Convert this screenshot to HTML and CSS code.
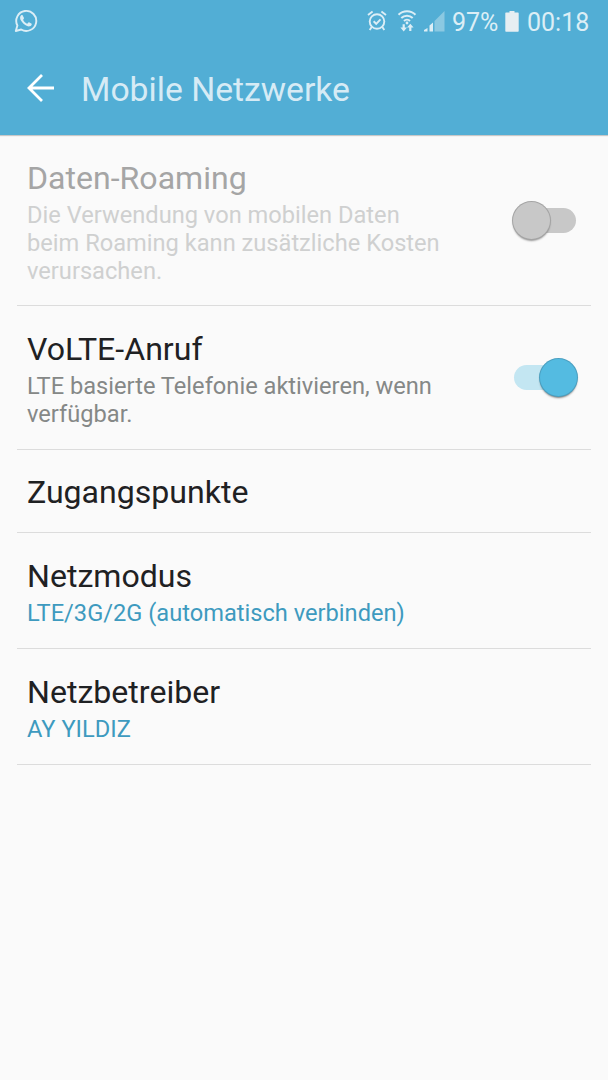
FILE: index.html
```
<!DOCTYPE html>
<html lang="de">
  <head>
    <meta charset="utf-8">
    <title>Mobile Netzwerke</title>
    <link rel="stylesheet" href="styles.css">
  </head>
  <body>
    <header>
      <div class="status">
        <svg class="whatsapp" width="24" height="24" viewBox="0 0 24 24">
          <path d="M1.800 22l1.600-5.500A10 10 0 1 1 7.200 20.500z" fill="none" stroke="currentColor" stroke-width="1.9" stroke-linejoin="round"/>
          <path d="M8.6 6.3c-.4-.6-.9-.4-1.4 0-2 2-.9 4.500.8 6.700 2.100 2.700 5.200 4.900 7.800 4.300 1.400-.4 2.200-1.500 1.900-2.600l-2.700-1.400c-.8-.2-1.200 1.500-2 1.400-1.500-.6-3-2-3.800-3.600-.2-.7 1-1.200.8-2z" fill="currentColor"/>
        </svg>
        <svg class="alarm" width="20" height="22" viewBox="0 0 20 22">
          <g fill="none" stroke="currentColor" stroke-width="1.9">
            <circle cx="10" cy="11.500" r="7.300"/>
            <path d="M1 5L5.600 1.500M19 5L14.400 1.500M4.700 17l-2 3M15.300 17l2 3M6.600 11.300l2.600 2.500 4.300-4.500"/>
          </g>
        </svg>
        <svg class="wifi" width="20" height="22" viewBox="0 0 20 22">
          <g fill="none" stroke="currentColor" stroke-width="2">
            <path d="M1.500 4.700a12 12 0 0 1 17 0M4.300 8a8.100 8.100 0 0 1 11.400 0M7 11a4.300 4.300 0 0 1 6 0"/>
          </g>
          <circle cx="10" cy="13" r="1.400" fill="currentColor"/>
          <path d="M5.600 14.300h2.200v3.200h2.200L6.700 21.500l-3.300-4h2.200zM12.200 21h2.200v-3.500h2.200l-3.300-3.700-3.300 3.700h2.200z" fill="currentColor"/>
        </svg>
        <svg class="signal" width="21" height="21" viewBox="0 0 21 21" fill="currentColor">
          <path d="M0 20.500V19l3.500-2v3.500zM5.500 20.500v-6l3.500-3v9z"/>
          <path d="M10.500 20.500V10L20.500 0v20.500z" opacity=".42"/>
        </svg>
        <span class="percent">97%</span>
        <svg class="battery" width="14" height="21" viewBox="0 0 14 21" fill="currentColor">
          <path d="M4.500 0h5v1.500h3.500q.7 0 .7.700V20q0 .7-.7.700H1q-.7 0-.7-.7V2.200q0-.7.7-.7h3.500z"/>
        </svg>
        <span class="clock">00:18</span>
      </div>
      <div class="toolbar">
        <svg class="back" width="28" height="28" viewBox="0 0 28 28">
          <path d="M15 1L2 14l13 13M2 14h25" fill="none" stroke="#fff" stroke-width="2.800"/>
        </svg>
        <h1>Mobile Netzwerke</h1>
      </div>
    </header>
    <main>
      <section class="item disabled">
        <div class="text">
          <h2>Daten-Roaming</h2>
          <p>Die Verwendung von mobilen Daten beim Roaming kann zusätzliche Kosten verursachen.</p>
        </div>
        <div class="switch"><span class="knob"></span></div>
      </section>
      <section class="item volte">
        <div class="text">
          <h2>VoLTE-Anruf</h2>
          <p>LTE basierte Telefonie aktivieren, wenn verfügbar.</p>
        </div>
        <div class="switch on"><span class="knob"></span></div>
      </section>
      <section class="item single">
        <h2>Zugangspunkte</h2>
      </section>
      <section class="item">
        <div class="text">
          <h2>Netzmodus</h2>
          <p class="value">LTE/3G/2G (automatisch verbinden)</p>
        </div>
      </section>
      <section class="item">
        <div class="text">
          <h2>Netzbetreiber</h2>
          <p class="value">AY YILDIZ</p>
        </div>
      </section>
    </main>
  </body>
</html>
```

FILE: styles.css
```
* {
  margin: 0;
  padding: 0;
  box-sizing: border-box;
}
body {
  background-color: #fafafa;
  font-family: Roboto, sans-serif;
  min-height: 100vh;
}
svg {
  display: block;
  flex: none;
}
header {
  height: 135px;
  background-color: #52aed5;
  box-shadow: 0 1px 1px rgba(0, 0, 0, 0.2);
}
.status {
  display: flex;
  align-items: center;
  height: 42px;
  padding: 0 18px 0 14px;
  color: #dceef6;
  font-size: 25px;
}
.alarm {
  margin-left: auto;
}
.wifi {
  margin-left: 10px;
}
.signal {
  margin-left: 7px;
}
.percent {
  width: 47px;
  margin-left: 7px;
  padding-top: 2px;
}
.battery {
  margin-left: 6px;
  color: #e6eef2;
}
.clock {
  width: 63px;
  margin-left: 8px;
  padding-top: 2px;
}
.toolbar {
  display: flex;
  align-items: center;
  height: 92px;
  padding: 0 27px;
}
h1 {
  margin-left: 26px;
  padding-top: 2px;
  color: #d6ebf5;
  font-size: 33.7px;
  font-weight: 400;
}
main {
  padding: 0 17px;
}
.item {
  display: flex;
  align-items: center;
  justify-content: space-between;
  height: 116px;
  padding: 0 15px 0 10px;
  border-bottom: 1px solid #dcdcdc;
}
.item.disabled {
  height: 171px;
}
.item.volte {
  height: 144px;
  padding-right: 14px;
}
.item.single {
  height: 83px;
  padding-top: 1px;
}
.text {
  width: 420px;
  padding-top: 2px;
}
.disabled .text {
  padding-top: 4px;
}
h2 {
  color: #1f2123;
  font-size: 32.1px;
  font-weight: 400;
  line-height: 38px;
}
p {
  margin-top: 4px;
  color: #858887;
  font-size: 23.65px;
  line-height: 28px;
}
.value {
  color: #3e9abf;
}
.disabled h2 {
  color: #a5a5a5;
}
.disabled p {
  color: #cfd0d0;
}
.switch {
  display: flex;
  align-items: center;
  width: 63px;
  height: 25px;
  border-radius: 13px;
  background-color: #c8c8c8;
}
.knob {
  width: 37px;
  height: 37px;
  border-radius: 50%;
  background-color: #c8c8c8;
  box-shadow: 0 0 0 1px #a4a4a4, 0 2px 2px rgba(0, 0, 0, 0.4);
}
.switch.on {
  justify-content: flex-end;
  background-color: #c3e6f2;
}
.on .knob {
  background-color: #54bbe1;
  box-shadow: 0 0 0 1px #4a9fc0, 0 2px 2px rgba(0, 0, 0, 0.5);
}
```
